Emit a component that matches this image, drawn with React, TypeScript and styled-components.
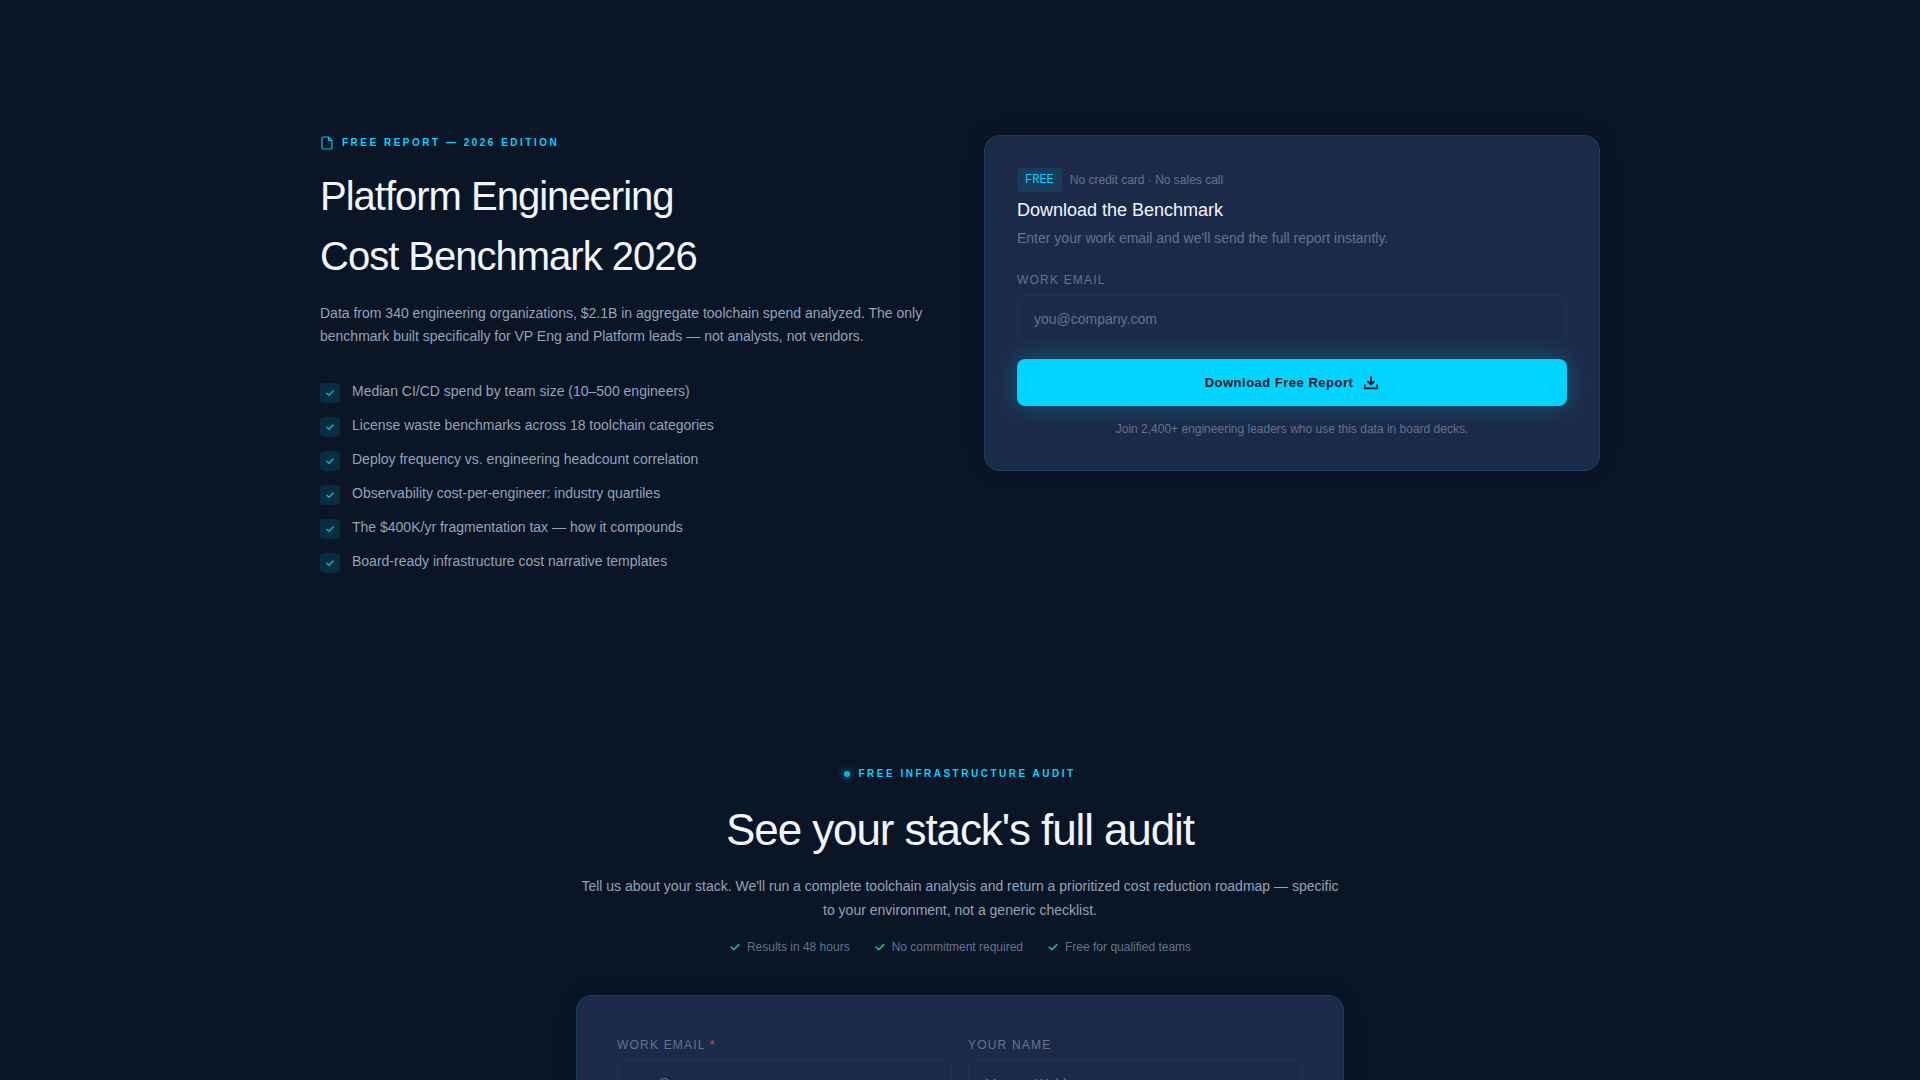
import React from "react";
import styled, { createGlobalStyle } from "styled-components";

const c = {
  bg: "#0a1526",
  card: "#1c2a4a",
  cyan: "#00d4ff",
  white: "#f1f5ff",
  soft: "#94a3b8",
  muted: "#64748b",
  green: "#10b981",
  red: "#ef4444",
};

const GlobalStyle = createGlobalStyle`
  *, *::before, *::after { box-sizing: border-box; }
  html { scrollbar-width: none; background: ${c.bg}; }
  body {
    margin: 0;
    color: ${c.white};
    background: ${c.bg};
    font-family: "Liberation Sans", Arial, sans-serif;
    font-size: 14px;
    line-height: 21px;
  }
  h2, h3, p, ul { margin: 0; padding: 0; font-weight: 400; }
`;

const Page = styled.main`
  padding-top: 38px;
`;

const Section = styled.section`
  padding: 96px 32px;
  border-top: 1px solid rgba(148, 163, 184, 0.05);
`;

const Columns = styled.div`
  display: grid;
  grid-template-columns: 1fr 1fr;
  align-items: start;
  gap: 48px;
  max-width: 1280px;
  margin: 0 auto;
`;

const Narrow = styled.div`
  max-width: 768px;
  margin: 0 auto;
`;

const Intro = styled.header`
  display: flex;
  flex-direction: column;
  align-items: center;
  text-align: center;
  margin-bottom: 39px;
`;

const Eyebrow = styled.p`
  display: flex;
  align-items: center;
  gap: 8px;
  margin-bottom: 16px;
  color: ${c.cyan};
  font-size: 10px;
  font-weight: 700;
  line-height: 15px;
  letter-spacing: 0.25em;
  text-transform: uppercase;

  svg { opacity: 0.9; }
`;

const Dot = styled.span`
  width: 6px;
  height: 6px;
  border-radius: 50%;
  background: ${c.cyan};
  box-shadow: 0 0 8px ${c.cyan};
  opacity: 0.85;
`;

const Title = styled.h2<{ $large?: boolean }>`
  margin-bottom: ${(p) => (p.$large ? 11 : 16)}px;
  font-size: ${(p) => (p.$large ? 44 : 40)}px;
  line-height: ${(p) => (p.$large ? 66 : 60)}px;
  letter-spacing: -0.025em;
`;

const Lead = styled.p<{ $loose?: boolean }>`
  color: ${c.soft};
  line-height: ${(p) => (p.$loose ? 24 : 23)}px;
`;

const Benefits = styled.ul`
  display: grid;
  gap: 12px;
  margin-top: 33px;
  list-style: none;
`;

const Benefit = styled.li`
  display: flex;
  align-items: flex-start;
  gap: 12px;
  color: ${c.soft};
`;

const CheckTile = styled.span`
  display: grid;
  place-items: center;
  flex: none;
  width: 20px;
  height: 20px;
  margin-top: 2px;
  border-radius: 4px;
  background: rgba(0, 212, 255, 0.12);
  color: ${c.cyan};

  svg { opacity: 0.85; }
`;

const Card = styled.form<{ $pad: number }>`
  padding: ${(p) => p.$pad}px;
  border: 1px solid rgba(0, 212, 255, 0.12);
  border-radius: 16px;
  background: ${c.card};
  box-shadow: 0 0 24px rgba(0, 12, 28, 0.12);
`;

const OfferRow = styled.div`
  display: flex;
  align-items: center;
  gap: 8px;
  margin-bottom: 5px;
`;

const FreeTag = styled.span`
  padding: 3px 8px;
  border-radius: 4px;
  background: rgba(0, 212, 255, 0.1);
  color: ${c.cyan};
  font-family: "Liberation Mono", monospace;
  font-size: 12px;
  line-height: 18px;
`;

const Small = styled.p`
  color: ${c.muted};
  font-size: 12px;
  line-height: 18px;
`;

const FootNote = styled(Small)`
  margin-top: 14px;
  text-align: center;
`;

const CardTitle = styled.h3`
  margin-bottom: 4px;
  font-size: 18px;
  line-height: 27px;
`;

const CardText = styled.p`
  margin-bottom: 22px;
  color: ${c.muted};
`;

const Fields = styled.div`
  display: grid;
  grid-template-columns: 1fr 1fr;
  gap: 16px;
`;

const Field = styled.div`
  display: grid;
  gap: 6px;
`;

const Label = styled.label`
  color: ${c.muted};
  font-size: 12px;
  line-height: 18px;
  letter-spacing: 0.1em;
  text-transform: uppercase;
`;

const Required = styled.span`
  color: ${c.red};
`;

const Input = styled.input`
  width: 100%;
  height: 48px;
  padding: 0 16px;
  border: 1px solid rgba(148, 163, 184, 0.06);
  border-radius: 8px;
  outline: none;
  background: transparent;
  color: ${c.white};
  font: inherit;

  &::placeholder { color: ${c.muted}; opacity: 1; }
  &:focus { border-color: ${c.cyan}; }
`;

const Submit = styled.button`
  display: flex;
  align-items: center;
  justify-content: center;
  gap: 10px;
  width: 100%;
  height: 47px;
  margin-top: 16px;
  border: 0;
  border-radius: 8px;
  background: ${c.cyan};
  box-shadow: 0 0 24px rgba(0, 212, 255, 0.3);
  color: ${c.bg};
  font: inherit;
  font-size: 13px;
  font-weight: 700;
  letter-spacing: 0.5px;
  cursor: pointer;
`;

const TrustRow = styled.ul`
  display: flex;
  flex-wrap: wrap;
  justify-content: center;
  gap: 24px;
  margin-top: 16px;
  list-style: none;
`;

const TrustItem = styled.li`
  display: flex;
  align-items: center;
  gap: 6px;
  color: ${c.muted};
  font-size: 12px;
  line-height: 18px;

  svg { color: ${c.green}; }
`;

const FileIcon = () => (
  <svg width="14" height="14" viewBox="0 0 14 14" fill="none" stroke="currentColor" strokeWidth="1.2" strokeLinejoin="round" aria-hidden="true">
    <path d="M8.5 1H3.2A1.2 1.2 0 0 0 2 2.2v9.6A1.2 1.2 0 0 0 3.2 13h7.6A1.2 1.2 0 0 0 12 11.8V4.5L8.5 1Z" />
    <path d="M8.5 1v3.5H12" />
  </svg>
);

const CheckIcon = ({ size }: { size: number }) => (
  <svg width={size} height={size} viewBox="0 0 10 10" fill="none" stroke="currentColor" strokeWidth="1.4" strokeLinecap="round" strokeLinejoin="round" aria-hidden="true">
    <path d="M1.8 5.2 4 7.2 8.2 3" />
  </svg>
);

const DownloadIcon = () => (
  <svg width="16" height="16" viewBox="0 0 16 16" fill="none" stroke="currentColor" strokeWidth="1.7" strokeLinecap="round" strokeLinejoin="round" aria-hidden="true">
    <path d="M8 1.800v7.700M5 6.700l3 3 3-3M1.800 10v3.300h12.400V10" />
  </svg>
);

const benefits = [
  "Median CI/CD spend by team size (10–500 engineers)",
  "License waste benchmarks across 18 toolchain categories",
  "Deploy frequency vs. engineering headcount correlation",
  "Observability cost-per-engineer: industry quartiles",
  "The $400K/yr fragmentation tax — how it compounds",
  "Board-ready infrastructure cost narrative templates",
];

const promises = ["Results in 48 hours", "No commitment required", "Free for qualified teams"];

const keepOnPage = (e: React.FormEvent) => e.preventDefault();

export default function App() {
  return (
    <>
      <GlobalStyle />
      <Page>
        <Section>
          <Columns>
            <div>
              <Eyebrow><FileIcon />Free Report — 2026 Edition</Eyebrow>
              <Title>Platform Engineering<br />Cost Benchmark 2026</Title>
              <Lead>
                Data from 340 engineering organizations, $2.1B in aggregate toolchain spend analyzed. The only
                benchmark built specifically for VP Eng and Platform leads — not analysts, not vendors.
              </Lead>
              <Benefits>
                {benefits.map((text) => (
                  <Benefit key={text}>
                    <CheckTile><CheckIcon size={10} /></CheckTile>
                    {text}
                  </Benefit>
                ))}
              </Benefits>
            </div>
            <Card $pad={32} onSubmit={keepOnPage}>
              <OfferRow>
                <FreeTag>FREE</FreeTag>
                <Small>No credit card · No sales call</Small>
              </OfferRow>
              <CardTitle>Download the Benchmark</CardTitle>
              <CardText>Enter your work email and we'll send the full report instantly.</CardText>
              <Field>
                <Label htmlFor="report-email">Work Email</Label>
                <Input id="report-email" type="email" placeholder="you@company.com" />
              </Field>
              <Submit type="submit">Download Free Report <DownloadIcon /></Submit>
              <FootNote>Join 2,400+ engineering leaders who use this data in board decks.</FootNote>
            </Card>
          </Columns>
        </Section>
        <Section>
          <Narrow>
            <Intro>
              <Eyebrow><Dot />Free Infrastructure Audit</Eyebrow>
              <Title $large>See your stack's full audit</Title>
              <Lead $loose>
                Tell us about your stack. We'll run a complete toolchain analysis and return a prioritized cost
                reduction roadmap — specific to your environment, not a generic checklist.
              </Lead>
              <TrustRow>
                {promises.map((text) => (
                  <TrustItem key={text}><CheckIcon size={12} />{text}</TrustItem>
                ))}
              </TrustRow>
            </Intro>
            <Card $pad={40} onSubmit={keepOnPage}>
              <Fields>
                <Field>
                  <Label htmlFor="audit-email">Work Email <Required>*</Required></Label>
                  <Input id="audit-email" type="email" placeholder="you@company.com" required />
                </Field>
                <Field>
                  <Label htmlFor="audit-name">Your Name</Label>
                  <Input id="audit-name" type="text" placeholder="Marcus Webb" />
                </Field>
              </Fields>
            </Card>
          </Narrow>
        </Section>
      </Page>
    </>
  );
}
